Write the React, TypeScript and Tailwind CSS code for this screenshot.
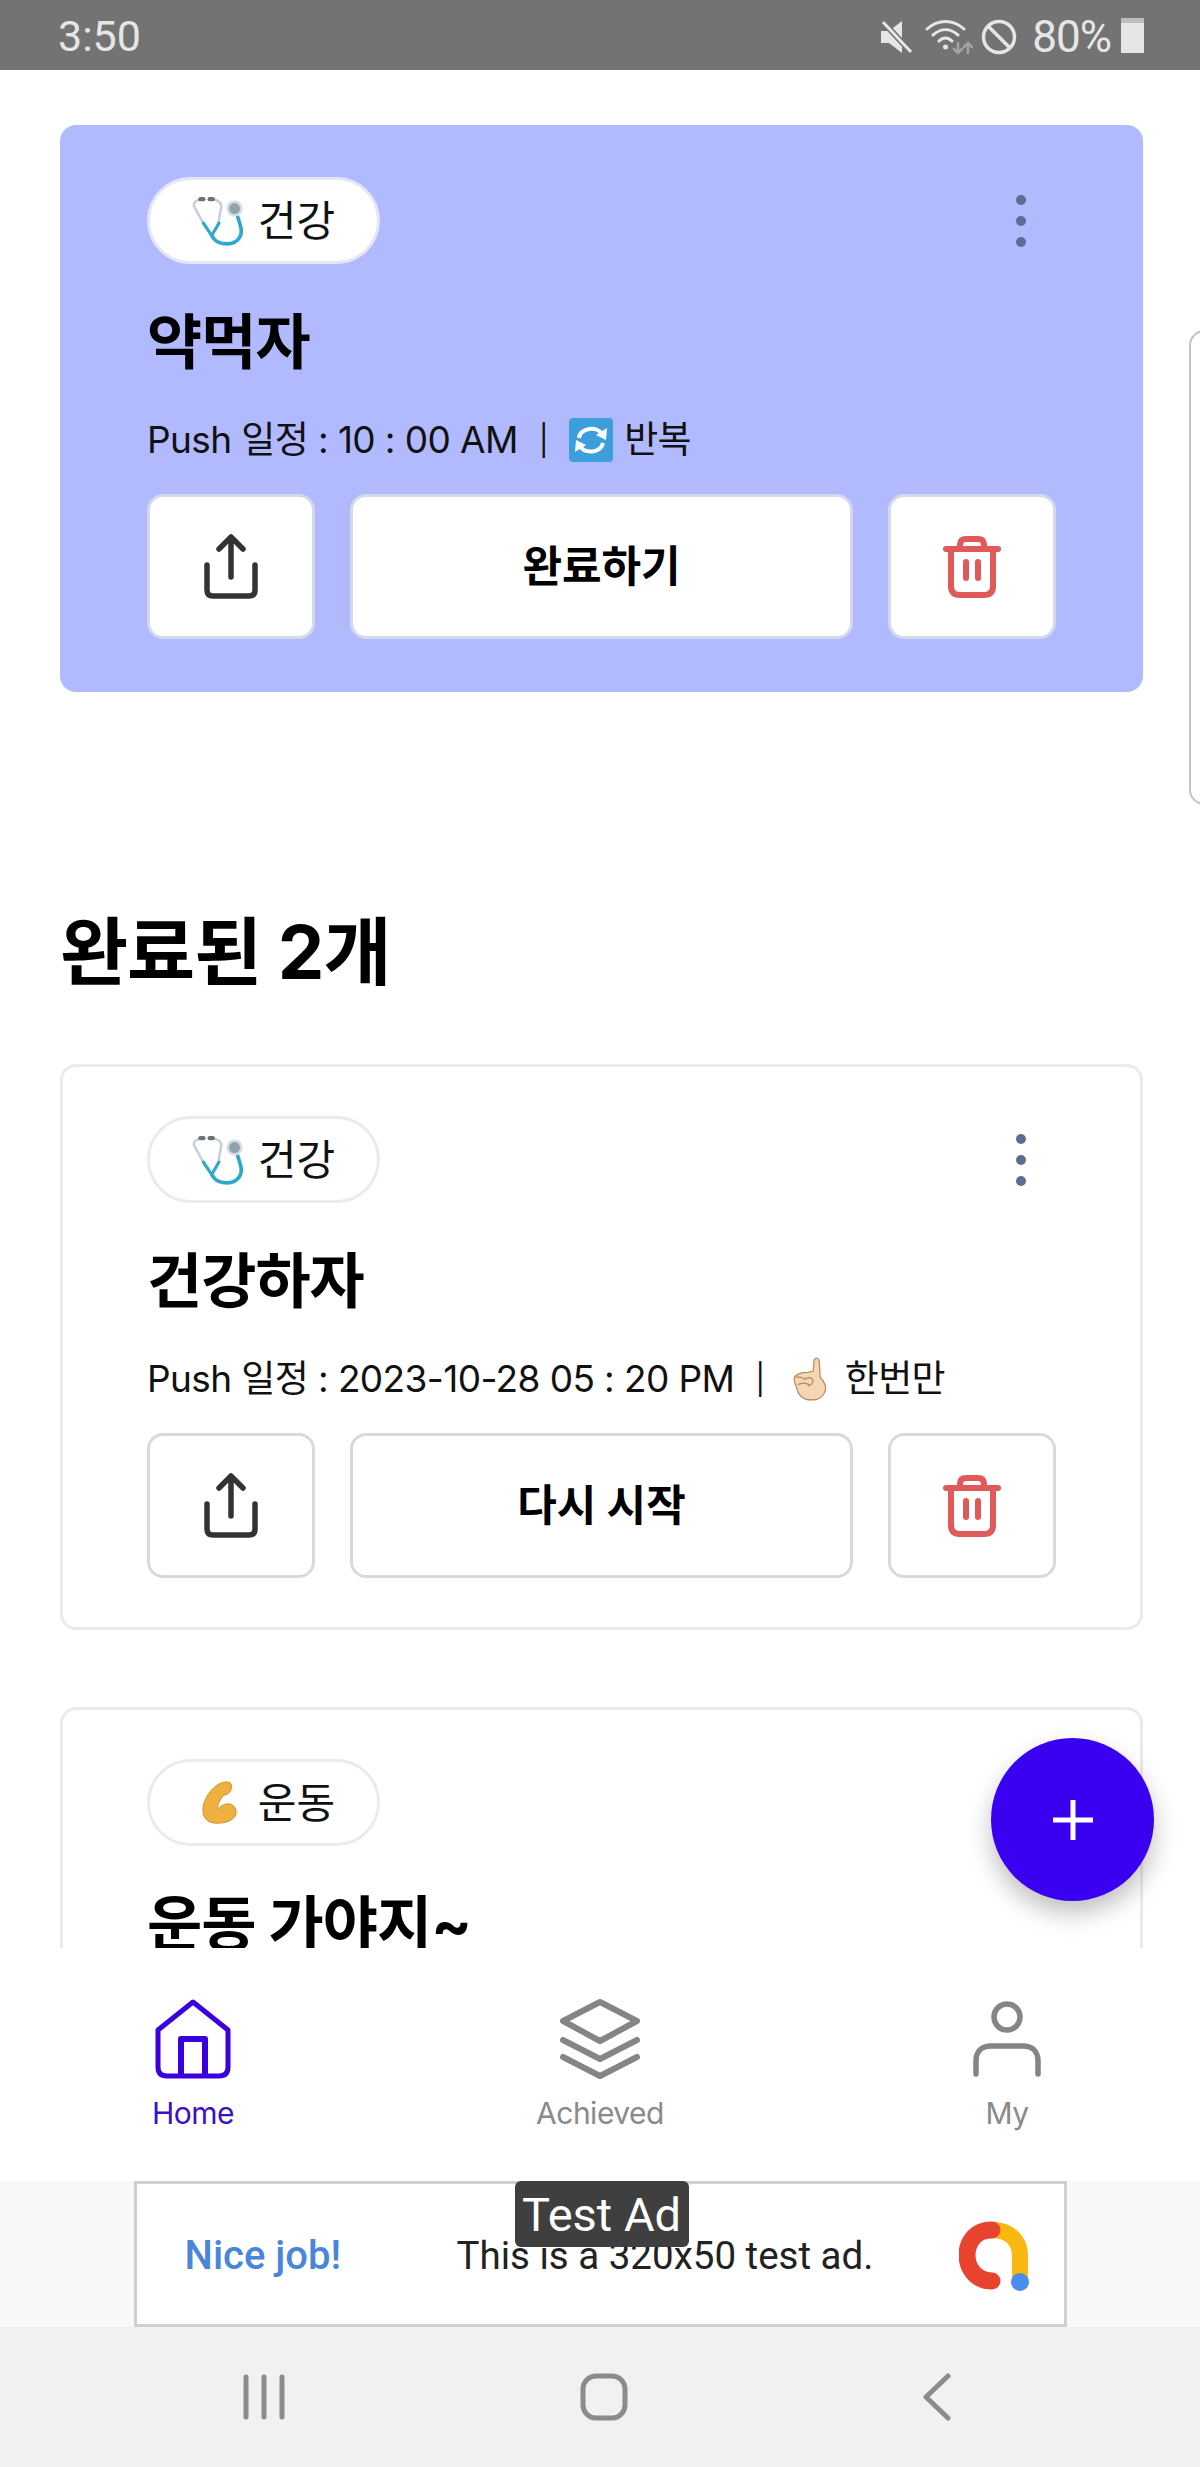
const sans = { fontFamily: '"Inter", "Noto Sans CJK KR", sans-serif' };

function Stethoscope() {
  return (
    <svg width="54" height="50" viewBox="0 0 52 48" fill="none" strokeLinecap="round" strokeLinejoin="round">
      <path d="M9 3C4 4 1 6 2 10L13 30" stroke="#c9d1d5" strokeWidth="2.5" />
      <path d="M18 3C24 3 29 6 28 11L25 28" stroke="#c9d1d5" strokeWidth="2.5" />
      <path d="M11 26L19 38L26 26" stroke="#2fa8cc" strokeWidth="3" />
      <path d="M19 38C23 45 28 46 34 46C44 46 49 38 47 30C46 26 45 23 44 20" stroke="#2fa8cc" strokeWidth="3.5" />
      <circle cx="41" cy="12" r="6.5" fill="#8fa3ad" stroke="#d5dde0" strokeWidth="2.5" />
      <rect x="6" y="1" width="7" height="4" rx="2" fill="#6b7378" />
      <rect x="15" y="1" width="7" height="4" rx="2" fill="#6b7378" />
    </svg>
  );
}

function Muscle() {
  return (
    <svg width="38" height="44" viewBox="0 0 38 44">
      <path d="M26 1C18 1 8 10 4 22C1 32 4 41 14 42C24 43 34 40 36 33C37 26 32 22 26 23C22 24 20 26 18 28C17 24 20 18 24 14C29 14 33 8 31 3C30 1 28 1 26 1Z" fill="#eeb040" stroke="#cf9228" strokeWidth="1" />
    </svg>
  );
}

function RepeatEmoji() {
  return (
    <svg width="44" height="44" viewBox="0 0 44 44" fill="none">
      <rect width="44" height="44" rx="4" fill="#3c9fdc" />
      <path d="M10 20C11 10 28 7 34 17" stroke="#fff" strokeWidth="4" />
      <path d="M38 10L37 22L27 17Z" fill="#fff" />
      <path d="M34 25C32 35 16 37 10 27" stroke="#fff" strokeWidth="4" />
      <path d="M6 34L7 22L17 27Z" fill="#fff" />
    </svg>
  );
}

function HandEmoji() {
  return (
    <svg className="mr-[6px] ml-[6px]" width="36" height="44" viewBox="0 0 34 43">
      <path d="M21 3C23 0 26 1 26 4L27 20C31 24 33 28 32 32C31 38 26 42 18 42C10 42 5 37 4 30C2 26 1 22 2 19C5 16 10 15 15 15L20 14Z" fill="#f5d6b2" stroke="#b98a5e" strokeWidth="1.2" />
      <path d="M3 20C7 19 10 20 12 22M5 27C9 25 13 25 16 27M12 22C15 19 19 20 20 23C19 27 17 28 15 28" fill="none" stroke="#b98a5e" strokeWidth="1.2" />
    </svg>
  );
}

function ShareIcon() {
  return (
    <svg width="56" height="66" viewBox="0 0 56 66" fill="none" stroke="#333" strokeWidth="5.5" strokeLinecap="round" strokeLinejoin="round">
      <path d="M28 43V4M16 15L28 3L40 15" />
      <path d="M4 31V56C4 60 6 62 10 62H46C50 62 52 60 52 56V31" />
    </svg>
  );
}

function TrashIcon() {
  return (
    <svg width="58" height="62" viewBox="0 0 58 62" fill="none" stroke="#e05a5a" strokeWidth="6" strokeLinecap="round" strokeLinejoin="round">
      <path d="M3 13H55" />
      <path d="M17 13V9C17 5 19 3 23 3H35C39 3 41 5 41 9V13" />
      <path d="M8 13V50C8 56 11 59 17 59H41C47 59 50 56 50 50V13" />
      <path d="M23 26V42M35 26V42" />
    </svg>
  );
}

function MenuDots() {
  return (
    <svg className="mr-[29px]" width="12" height="54" viewBox="0 0 12 54" fill="#5f6b93">
      <circle cx="6" cy="6" r="5" />
      <circle cx="6" cy="27" r="5" />
      <circle cx="6" cy="48" r="5" />
    </svg>
  );
}

function StatusIcons() {
  return (
    <>
      <svg width="32" height="34" viewBox="0 0 32 34">
        <path d="M0 11H8L21 1V33L8 23H0Z" fill="#e6e6e6" />
        <path d="M2 2L30 32" stroke="#737373" strokeWidth="6" />
        <path d="M2 2L30 32" stroke="#e6e6e6" strokeWidth="3" />
      </svg>
      <svg className="ml-[12px]" width="48" height="36" viewBox="0 0 48 36" fill="none" stroke="#e6e6e6" strokeWidth="3" strokeLinecap="round">
        <path d="M2 10C13 0 28 0 39 10M8 16C16 9 25 9 33 16M14 22C18 18 23 18 27 22" />
        <circle cx="20.5" cy="28" r="2.5" fill="#e6e6e6" stroke="none" />
        <path d="M33 24V34M29 30L33 34L37 30M43 34V24M39 28L43 24L47 28" stroke="#a3a3a3" strokeWidth="2.5" />
      </svg>
      <svg className="ml-[8px]" width="36" height="36" viewBox="0 0 36 36" fill="none" stroke="#e6e6e6" strokeWidth="3.5">
        <circle cx="18" cy="18" r="15.5" />
        <path d="M7 7L29 29" />
      </svg>
    </>
  );
}

function Card({
  active,
  icon,
  tag,
  title,
  meta,
  metaIcon,
  metaText,
  action,
}: {
  active?: boolean;
  icon: React.ReactNode;
  tag: string;
  title: string;
  meta?: string;
  metaIcon?: React.ReactNode;
  metaText?: string;
  action?: string;
}) {
  const btn = `flex h-[145px] items-center justify-center rounded-[16px] border-[3px] bg-white ${active ? "border-[#d3d8ea]" : "border-[#d9d9d9]"}`;
  return (
    <div className={`rounded-[16px] ${active ? "h-[567px] bg-[#b1baff] px-[87px] pt-[52px]" : "h-[566px] border-[3px] border-[#ebebeb] bg-white px-[84px] pt-[49px]"}`}>
      <div className="flex items-center justify-between">
        <div className={`flex h-[87px] w-[233px] items-center justify-center gap-[12px] rounded-full border-[3px] bg-white ${active ? "border-[#e4e6f5]" : "border-[#ebebeb]"}`}>
          <div className="flex w-[54px] justify-center">{icon}</div>
          <span className="text-[42px] text-[#111]">{tag}</span>
        </div>
        <MenuDots />
      </div>
      <div className="mt-[33px] text-[60px] leading-[90px] font-bold tracking-[-1px] text-black">{title}</div>
      {meta && (
        <div className="mt-[28px] flex h-[50px] items-center text-[37px] tracking-[-0.6px] text-[#111]">
          <span>{meta}</span>
          <span className="mx-[21px] text-[30px]">|</span>
          {metaIcon}
          <span className="ml-[11px]">{metaText}</span>
        </div>
      )}
      {action && (
        <div className="mt-[29px] flex gap-[35px]">
          <div className={`${btn} w-[168px]`}><ShareIcon /></div>
          <div className={`${btn} flex-1 text-[43px] font-bold text-black`}>{action}</div>
          <div className={`${btn} w-[168px]`}><TrashIcon /></div>
        </div>
      )}
    </div>
  );
}

function NavItem({ label, color, children }: { label: string; color: string; children: React.ReactNode }) {
  return (
    <div className="flex w-[200px] flex-col items-center">
      <div className="flex h-[90px] items-center justify-center">{children}</div>
      <span className="mt-[7px] text-[30px] tracking-[-0.5px]" style={{ color }}>{label}</span>
    </div>
  );
}

export default function App() {
  return (
    <div className="flex h-[2467px] w-[1200px] flex-col overflow-hidden bg-white" style={sans}>
      {/* status bar */}
      <div className="flex h-[70px] shrink-0 items-center justify-between bg-[#737373] pt-[3px] pr-[56px] pl-[58px] font-['Roboto'] text-[43px] text-[#e6e6e6]">
        <span>3:50</span>
        <div className="flex items-center">
          <StatusIcons />
          <span className="ml-[15px] text-[44px] tracking-[-1px]">80%</span>
          <div className="relative mt-[3px] ml-[10px] h-[30px] w-[23px] bg-[#e6e6e6] before:absolute before:-top-[5px] before:left-0 before:h-[5px] before:w-[23px] before:bg-[#bdbdbd]" />
        </div>
      </div>

      {/* scrolling list */}
      <div className="relative min-h-0 flex-1 overflow-hidden">
        <div className="ml-[60px] w-[1083px] pt-[55px]">
          <Card active icon={<Stethoscope />} tag="건강" title="약먹자" meta="Push 일정 : 10 : 00 AM" metaIcon={<RepeatEmoji />} metaText="반복" action="완료하기" />
          <h2 className="mt-[210px] text-[74px] leading-[100px] font-bold tracking-[-1px] text-black">완료된 2개</h2>
          <div className="mt-[62px] flex flex-col gap-[77px]">
            <Card icon={<Stethoscope />} tag="건강" title="건강하자" meta="Push 일정 : 2023-10-28 05 : 20 PM" metaIcon={<HandEmoji />} metaText="한번만" action="다시 시작" />
            <Card icon={<Muscle />} tag="운동" title="운동 가야지~" />
          </div>
        </div>
        {/* next page peeking in from the right */}
        <div className="absolute top-[260px] -right-[20px] h-[475px] w-[31px] rounded-[16px] border-[2px] border-[#c4c4c4] bg-white" />
        {/* add button */}
        <div className="absolute top-[1668px] left-[991px] flex size-[163px] items-center justify-center rounded-full bg-[#3a00f0] shadow-[0_12px_24px_rgba(0,0,0,0.25)]">
          <svg width="44" height="44" viewBox="0 0 44 44" stroke="#fff" strokeWidth="5"><path d="M22 2V42M2 22H42" /></svg>
        </div>
      </div>

      {/* bottom tabs */}
      <div className="flex h-[233px] shrink-0 justify-between bg-white pt-[46px] pr-[93px] pl-[93px]">
        <NavItem label="Home" color="#3b10c9">
          <svg width="76" height="80" viewBox="0 0 76 80" fill="none" stroke="#3a00e0" strokeWidth="5" strokeLinejoin="round">
            <path d="M38 3L73 31V68C73 74 70 77 64 77H12C6 77 3 74 3 68V31Z" />
            <path d="M26 77V40H50V77" strokeWidth="6" />
          </svg>
        </NavItem>
        <NavItem label="Achieved" color="#8a8a8a">
          <svg width="80" height="80" viewBox="0 0 80 80" fill="none" stroke="#858585" strokeWidth="6" strokeLinecap="round" strokeLinejoin="round">
            <path d="M40 3L77 22L40 42L3 22Z" />
            <path d="M3 41L40 60L77 41" />
            <path d="M3 58L40 77L77 58" />
          </svg>
        </NavItem>
        <NavItem label="My" color="#8a8a8a">
          <svg width="68" height="76" viewBox="0 0 68 76" fill="none" stroke="#858585" strokeWidth="5.5" strokeLinecap="round">
            <circle cx="34" cy="16" r="13" />
            <path d="M3 73V60C3 50 9 45 18 45H50C59 45 65 50 65 60V73" />
          </svg>
        </NavItem>
      </div>

      {/* ad banner */}
      <div className="flex h-[146px] shrink-0 justify-center bg-[#f8f8f8]">
        <div className="relative flex h-[146px] w-[933px] items-center border-[3px] border-[#cfcfcf] bg-white pt-[4px] pr-[34px] pl-[48px] font-['Roboto']">
          <span className="w-[272px] text-[40px] font-medium text-[#4a86d8]">Nice job!</span>
          <span className="text-[38.5px] text-[#222]">This is a 320x50 test ad.</span>
          <svg className="absolute top-[37px] right-[35px]" width="70" height="70" viewBox="0 0 70 70" fill="none" strokeLinecap="round">
            <path d="M33 9C56 9 61 26 61 34V60" stroke="#f9b80f" strokeWidth="16" />
            <path d="M33 9C14 9 8 24 8 34C8 46 16 60 33 60" stroke="#e8432e" strokeWidth="17" />
            <circle cx="61" cy="61" r="9" fill="#4a8df0" />
          </svg>
          <div className="absolute -top-[3px] left-[378px] flex h-[66px] w-[174px] items-center justify-center rounded-[6px] bg-[#3f3f3f] pt-[2px] text-[47px] text-white">Test Ad</div>
        </div>
      </div>

      {/* android nav */}
      <div className="flex h-[140px] shrink-0 items-center justify-between bg-[#f1f1f1] pr-[248px] pl-[242px]">
        <svg width="44" height="46" viewBox="0 0 44 46" stroke="#8c8c8c" strokeWidth="5" strokeLinecap="round"><path d="M4 3V43M22 3V43M40 3V43" /></svg>
        <svg width="48" height="48" viewBox="0 0 48 48" fill="none" stroke="#8c8c8c" strokeWidth="5"><rect x="3" y="3" width="42" height="42" rx="13" /></svg>
        <svg width="30" height="48" viewBox="0 0 30 48" fill="none" stroke="#8c8c8c" strokeWidth="5" strokeLinecap="round" strokeLinejoin="round"><path d="M26 3L4 24L26 45" /></svg>
      </div>
    </div>
  );
}
